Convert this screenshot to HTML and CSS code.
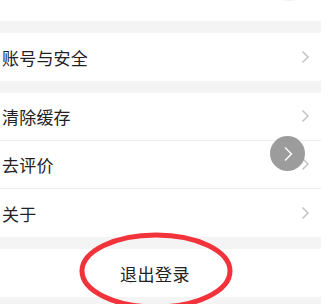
FILE: index.html
```html
<!DOCTYPE html>
<html>
<head>
    <title>设置</title>
    <link rel="stylesheet" href="styles.css">
</head>
<body>
    <div class="page">
        <div class="top-row">
            <span class="top-label">消息提醒</span>
            <span class="top-switch"></span>
        </div>
        <div class="gap"></div>

        <div class="item">
            <span class="item-text">账号与安全</span>
            <svg class="arrow" width="9" height="14" viewBox="0 0 9 14"><path d="M1.5 1.5 L7 7 L1.5 12.5" fill="none" stroke="#c4c4c4" stroke-width="1.6"/></svg>
        </div>
        <div class="gap"></div>

        <div class="item line">
            <span class="item-text">清除缓存</span>
            <svg class="arrow" width="9" height="14" viewBox="0 0 9 14"><path d="M1.5 1.5 L7 7 L1.5 12.5" fill="none" stroke="#c4c4c4" stroke-width="1.6"/></svg>
        </div>
        <div class="item line">
            <span class="item-text">去评价</span>
            <svg class="arrow" width="9" height="14" viewBox="0 0 9 14"><path d="M1.5 1.5 L7 7 L1.5 12.5" fill="none" stroke="#c4c4c4" stroke-width="1.6"/></svg>
            <!-- 悬浮返回按钮 -->
            <div class="float-btn">
                <svg width="10" height="16" viewBox="0 0 10 16"><path d="M2 1.5 L8.5 8 L2 14.5" fill="none" stroke="#fff" stroke-width="1.4"/></svg>
            </div>
        </div>
        <div class="item">
            <span class="item-text">关于</span>
            <svg class="arrow" width="9" height="14" viewBox="0 0 9 14"><path d="M1.5 1.5 L7 7 L1.5 12.5" fill="none" stroke="#c4c4c4" stroke-width="1.6"/></svg>
        </div>
        <div class="gap"></div>

        <div class="logout">
            <span class="logout-text">退出登录</span>
            <svg class="mark" width="160" height="82" viewBox="0 0 160 82"><ellipse cx="79" cy="40" rx="74" ry="36" fill="none" stroke="#f2333b" stroke-width="5"/></svg>
        </div>
        <div class="gap"></div>
    </div>
</body>
</html>
```

FILE: styles.css
```css
body { margin:0; background:#fff; font-family:"Noto Sans CJK SC","Liberation Sans",sans-serif; }
.page { width:321px; overflow:hidden; height:304px; }

.top-row {
    height:21px;
    position:relative;
    overflow:hidden;
}
.top-label {
    position:absolute;
    left:-13px; top:-16px;
    font-size:14px;
    line-height:17px;
    color:#b4b4b4;
}
.top-switch {
    position:absolute;
    left:276px; top:-20px;
    width:26px; height:21px;
    border-radius:11px;
    background:#f3f3f3;
}

.gap { height:12px; background:#f4f4f4; }

.item {
    box-sizing:border-box;
    height:48px;
    display:flex;
    align-items:center;
    justify-content:space-between;
    padding:0 11px 0 2px;
    position:relative;
}
.item.line { border-bottom:1px solid #ececec; }
.item-text { font-size:17px; color:#222; letter-spacing:0.2px; }
.arrow { display:block; margin-top:-1px; }

.float-btn {
    position:absolute;
    left:270px; top:-5px;
    width:35px; height:35px;
    border-radius:50%;
    background:rgba(145,145,145,0.9);
    display:flex;
    justify-content:center;
    align-items:center;
}

.logout {
    height:48px;
    display:flex;
    align-items:center;
    padding-left:120px;
    position:relative;
}
.logout-text { font-size:17px; color:#222; letter-spacing:0.5px; }
.mark {
    position:absolute;
    left:77px; top:-18px;
}
```
